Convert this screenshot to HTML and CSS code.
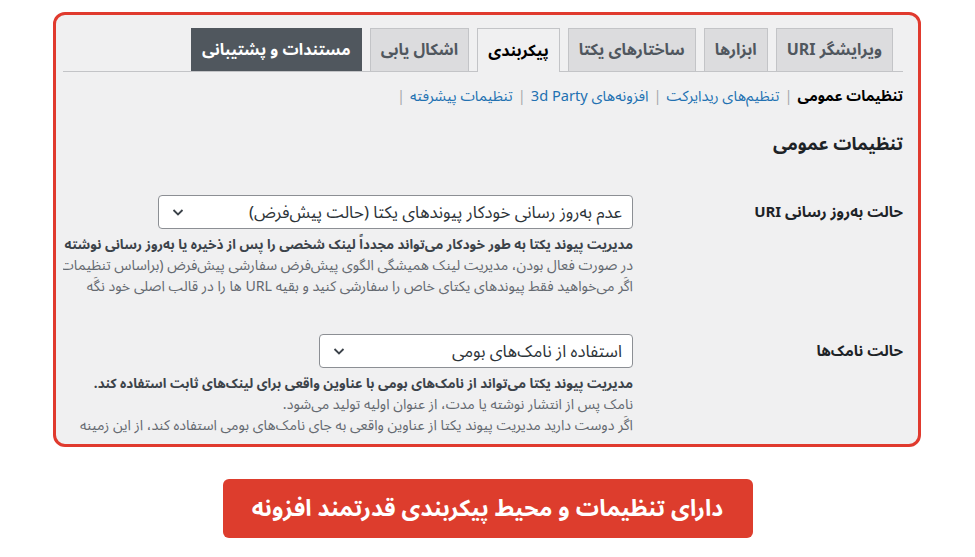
FILE: index.html
```html
<!DOCTYPE html>
<html lang="fa" dir="rtl">
<head>
    <meta charset="UTF-8">
    <meta name="viewport" content="width=device-width, initial-scale=1.0">
    <title>تنظیمات پیوند یکتا</title>
    <link rel="stylesheet" href="styles.css">
</head>
<body>
    <div class="frame">
        <div class="wrap">
            <nav class="tabs">
                <a class="tab">ویرایشگر URI</a>
                <a class="tab">ابزارها</a>
                <a class="tab">ساختارهای یکتا</a>
                <a class="tab active">پیکربندی</a>
                <a class="tab">اشکال یابی</a>
                <a class="tab dark">مستندات و پشتیبانی</a>
            </nav>

            <ul class="subnav">
                <li><strong>تنظیمات عمومی</strong><span class="sep">|</span></li>
                <li><a>تنظیم‌های ریدایرکت</a><span class="sep">|</span></li>
                <li><a>افزونه‌های 3d Party</a><span class="sep">|</span></li>
                <li><a>تنظیمات پیشرفته</a><span class="sep">|</span></li>
            </ul>

            <h2 class="section-title">تنظیمات عمومی</h2>

            <div class="form-row">
                <div class="label">حالت به‌روز رسانی URI</div>
                <div class="field">
                    <div class="select wide">
                        <span>عدم به‌روز رسانی خودکار پیوندهای یکتا (حالت پیش‌فرض)</span>
                        <svg class="chev" width="14" height="14" viewBox="0 0 14 14"><path d="M2.5 5 L7 9.5 L11.5 5" fill="none" stroke="#3c434a" stroke-width="1.8"/></svg>
                    </div>
                    <p class="desc"><strong>مدیریت پیوند یکتا به طور خودکار می‌تواند مجدداً لینک شخصی را پس از ذخیره یا به‌روز رسانی نوشته</strong></p>
                    <p class="desc">در صورت فعال بودن، مدیریت لینک همیشگی الگوی پیش‌فرض سفارشی پیش‌فرض (براساس تنظیمات</p>
                    <p class="desc">اگَر می‌خواهید فقط پیوندهای یکتای خاص را سفارشی کنید و بقیه URL ها را در قالب اصلی خود نگَه</p>
                </div>
            </div>

            <div class="form-row second">
                <div class="label">حالت نامک‌ها</div>
                <div class="field">
                    <div class="select narrow">
                        <span>استفاده از نامک‌های بومی</span>
                        <svg class="chev" width="14" height="14" viewBox="0 0 14 14"><path d="M2.5 5 L7 9.5 L11.5 5" fill="none" stroke="#3c434a" stroke-width="1.8"/></svg>
                    </div>
                    <p class="desc"><strong>مدیریت پیوند یکتا می‌تواند از نامک‌های بومی با عناوین واقعی برای لینک‌های ثابت استفاده کند.</strong></p>
                    <p class="desc">نامک پس از انتشار نوشته یا مدت، از عنوان اولیه تولید می‌شود.</p>
                    <p class="desc">اگَر دوست دارید مدیریت پیوند یکتا از عناوین واقعی به جای نامک‌های بومی استفاده کند، از این زمینه</p>
                </div>
            </div>
        </div>
    </div>

    <div class="banner">دارای تنظیمات و محیط پیکربندی قدرتمند افزونه</div>
</body>
</html>
```

FILE: styles.css
```css
body {
    margin: 0;
    background: #fff;
    font-family: 'Noto Sans Arabic', 'Noto Naskh Arabic', 'DejaVu Sans', sans-serif;
    color: #1d2327;
}
.frame {
    margin: 12px auto 0 53px;
    width: 862px;
    height: 429px;
    border: 3px solid #e03a2e;
    border-radius: 12px;
    background: #f0f0f1;
    overflow: hidden;
}
.wrap {
    margin-left: 7px;
    padding-right: 15px;
    height: 100%;
    overflow: hidden;
}
.tabs {
    display: flex;
    gap: 8px;
    padding: 13px 10px 0 0;
    border-bottom: 1px solid #c3c4c7;
    height: 43px;
    box-sizing: content-box;
}
.tab {
    display: flex;
    align-items: center;
    padding: 0 10px;
    height: 42px;
    background: #dcdcde;
    border: 1px solid #c3c4c7;
    border-bottom: none;
    font-size: 16px;
    font-weight: bold;
    color: #50575e;
    white-space: nowrap;
}
.tab.active {
    background: #f0f0f1;
    color: #000;
    height: 43px;
    margin-bottom: -1px;
}
.tab.dark {
    background: #50575e;
    border-color: #50575e;
    color: #fff;
}
.subnav {
    list-style: none;
    display: flex;
    margin: 15px 0 0;
    padding: 0;
    font-size: 14.6px;
    line-height: 20px;
}
.subnav strong {
    color: #000;
}
.subnav a {
    color: #2271b1;
}
.sep {
    color: #a7aaad;
    margin: 0 5px;
}
.section-title {
    font-size: 18px;
    margin: 24px 0 0;
    line-height: 26px;
    color: #1d2327;
}
.form-row {
    display: flex;
    margin-top: 38px;
}
.form-row.second {
    margin-top: 37px;
}
.label {
    width: 270px;
    flex-shrink: 0;
    font-size: 15px;
    font-weight: bold;
    line-height: 34px;
}
.field {
    flex: 1;
    min-width: 0;
}
.select {
    display: flex;
    align-items: center;
    justify-content: space-between;
    height: 32px;
    padding: 0 10px 0 12px;
    background: #fff;
    border: 1px solid #8c8f94;
    border-radius: 4px;
    font-size: 16.8px;
    color: #2c3338;
    box-sizing: content-box;
}
.select.wide {
    width: 451px;
}
.select.narrow {
    width: 290px;
}
.chev {
    display: block;
}
.desc {
    margin: 0;
    font-size: 14.2px;
    line-height: 21px;
    height: 21px;
    color: #646970;
    white-space: nowrap;
}
.desc:nth-of-type(1) {
    margin-top: 5px;
}
.desc strong {
    font-size: 13.4px;
    color: #3c434a;
}
.banner {
    width: 530px;
    height: 59px;
    margin: 32px auto 0;
    background: #dd3d2d;
    border-radius: 6px;
    color: #fff;
    font-size: 23px;
    font-weight: bold;
    display: flex;
    align-items: center;
    justify-content: center;
}
```
